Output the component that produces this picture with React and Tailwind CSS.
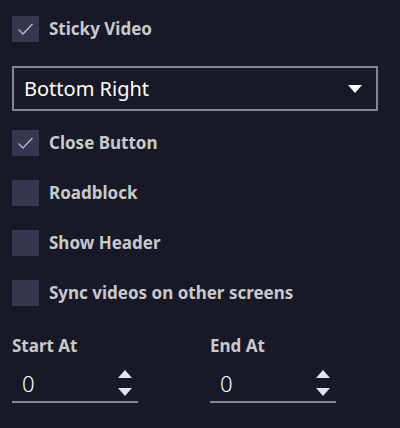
import { useState } from "react";

function Check({ label, checked, onToggle }) {
  return (
    <label className="flex items-center h-[26px] gap-[10px] cursor-pointer" onClick={onToggle}>
      <span className="w-[27px] h-[26px] bg-[#353650] flex items-center justify-center">
        {checked && (
          <svg width="17" height="14" viewBox="0 0 17 14" fill="none">
            <path d="M1.5 7.5 L6 12 L15.5 2" stroke="#b8b8c4" strokeWidth="1.4" />
          </svg>
        )}
      </span>
      <span className="text-[17px] font-bold text-[#c9c9cc]">{label}</span>
    </label>
  );
}

function NumberField({ label, value }) {
  return (
    <div className="flex flex-col w-[126px]">
      <span className="text-[17px] font-bold text-[#c9c9cc] leading-[20px]">{label}</span>
      <div className="flex items-center justify-between h-[38px] mt-[9px] border-b-2 border-[#85858d] pl-[10px] pr-[6px]">
        <span className="text-[22px] font-light text-white leading-none">{value}</span>
        <div className="flex flex-col items-center gap-[10px]">
          <svg width="14" height="8" viewBox="0 0 14 8"><path d="M0 8 L7 0 L14 8 Z" fill="#e4e4e8" /></svg>
          <svg width="14" height="8" viewBox="0 0 14 8"><path d="M0 0 L7 8 L14 0 Z" fill="#e4e4e8" /></svg>
        </div>
      </div>
    </div>
  );
}

export default function App() {
  const [opts, setOpts] = useState({ sticky: true, close: true, road: false, header: false, sync: false });
  const toggle = (k) => (e) => { e.preventDefault(); setOpts({ ...opts, [k]: !opts[k] }); };

  return (
    <div className="w-[400px] h-[428px] bg-[#171926] px-[12px] pt-[16px] font-['Noto_Sans',sans-serif]">
      <Check label="Sticky Video" checked={opts.sticky} onToggle={toggle("sticky")} />

      <div className="mt-[24px] w-[366px] h-[45px] border-2 border-[#85858d] flex items-center justify-between pl-[10px] pr-[14px]">
        <span className="text-[20px] text-white">Bottom Right</span>
        <svg width="14" height="8" viewBox="0 0 14 8"><path d="M0 0 L14 0 L7 8 Z" fill="#ffffff" /></svg>
      </div>

      <div className="mt-[19px] flex flex-col gap-[24px]">
        <Check label="Close Button" checked={opts.close} onToggle={toggle("close")} />
        <Check label="Roadblock" checked={opts.road} onToggle={toggle("road")} />
        <Check label="Show Header" checked={opts.header} onToggle={toggle("header")} />
        <Check label="Sync videos on other screens" checked={opts.sync} onToggle={toggle("sync")} />
      </div>

      <div className="mt-[30px] flex gap-[72px]">
        <NumberField label="Start At" value="0" />
        <NumberField label="End At" value="0" />
      </div>
    </div>
  );
}
